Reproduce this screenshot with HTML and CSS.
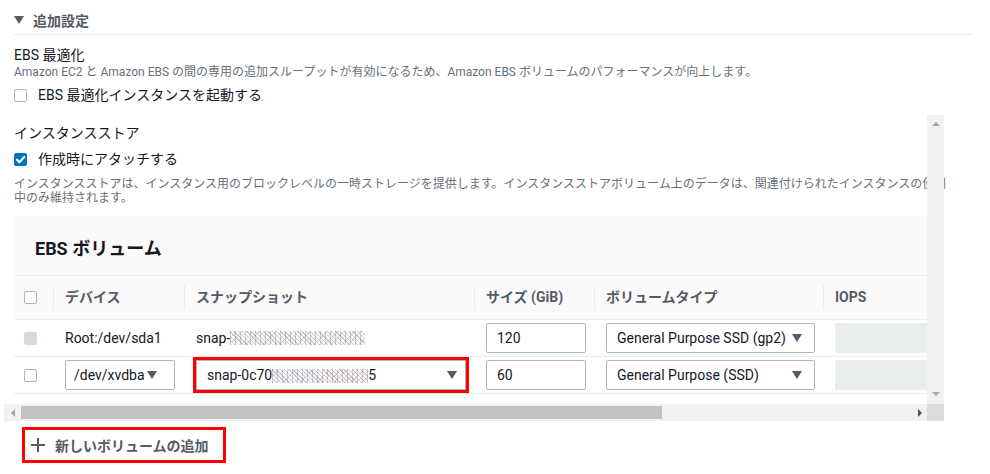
FILE: index.html
```html
<!DOCTYPE html>
<html lang=ja><head>
<meta charset=UTF-8>
<meta name=viewport content="width=device-width,initial-scale=1">
<title>追加設定</title><link rel="stylesheet" href="styles.css"></head><body>
<div class=wrap>
<div class=section-head><span class=caret></span>追加設定</div>
<div class=opt>
<div class=opt-title>EBS 最適化</div>
<div class=desc>Amazon EC2 と Amazon EBS の間の専用の追加スループットが有効になるため、Amazon EBS ボリュームのパフォーマンスが向上します。</div>
<label class=check-row><span class=cb></span>EBS 最適化インスタンスを起動する</label>
</div>
<div class=scroller>
<div class=scroll-body>
<div class=opt-title>インスタンスストア</div>
<label class="check-row mt5"><span class="cb on"><svg viewBox="0 0 13 13" width=13 height=13><path d="M3 6.8l2.4 2.4L10.2 4" fill=none stroke="#fff" stroke-width=2.2 stroke-linecap=round stroke-linejoin=round /></svg></span>作成時にアタッチする</label>
<div class="desc nowrap mt8">インスタンスストアは、インスタンス用のブロックレベルの一時ストレージを提供します。インスタンスストアボリューム上のデータは、関連付けられたインスタンスの使用<br>中のみ維持されます。</div>
<div class=panel>
<div class=panel-title>EBS ボリューム</div>
<div class=tbl>
<div class="trow thead">
<div class=cell><span class=cb></span></div>
<div class=cell><div class=th>デバイス</div></div>
<div class=cell><div class=th>スナップショット</div></div>
<div class=cell><div class=th>サイズ (GiB)</div></div>
<div class=cell><div class=th>ボリュームタイプ</div></div>
<div class=cell><div class=th>IOPS</div></div>
</div>
<div class=trow>
<div class=cell><span class="cb off"></span></div>
<div class=cell>Root:/dev/sda1</div>
<div class=cell>snap-<span class="blur w135"></span></div>
<div class=cell><div class="field w100">120</div></div>
<div class=cell><div class="field sel w209"><span class=val>General Purpose SSD (gp2)</span><span class=arrow></span></div></div>
<div class=cell><div class=iops></div></div>
</div>
<div class=trow>
<div class=cell><span class=cb></span></div>
<div class=cell><div class="field sel w110 tight"><span class=val>/dev/xvdba</span><span class="arrow near"></span></div></div>
<div class=cell><div class="field sel w270 mark"><span class=val>snap-0c70<span class="blur w96"></span>5</span><span class=arrow></span></div></div>
<div class=cell><div class="field w100">60</div></div>
<div class=cell><div class="field sel w209"><span class=val>General Purpose (SSD)</span><span class=arrow></span></div></div>
<div class=cell><div class=iops></div></div>
</div>
</div>
</div>
</div>
<div class=vbar><span class="tri up"></span><span class="tri down"></span></div>
<div class=hbar><span class=hbtn><span class="tri left"></span></span><span class=thumb></span><span class=hbtn><span class="tri right"></span></span></div>
<div class=corner></div>
</div>
<button class=add>
<svg viewBox="0 0 14 14" width=14 height=14><path d="M7 0v14M0 7h14" stroke="#545b64" stroke-width=2 /></svg>新しいボリュームの追加</button>
</div>
</body></html>
```
FILE: styles.css
```css
body{margin:0;background:#fff;color:#16191f;font-family:Roboto,"Noto Sans CJK JP",sans-serif;font-size:14px}
.wrap{padding:0 17px 0 14px}
.section-head{height:28px;padding-top:6px;display:flex;align-items:center;border-bottom:1px solid #eaeded;font-weight:700;color:#545b64}
.caret{width:0;height:0;border-left:5px solid transparent;border-right:5px solid transparent;border-top:8px solid #545b64;margin-right:9px}
.opt{margin-top:10px}.opt-title{line-height:20px}
.desc{font-size:12px;line-height:14px;color:#687078}.nowrap{white-space:nowrap}
.mt5{margin-top:5px}.mt8{margin-top:8px}
.check-row{display:flex;align-items:center;gap:11px;line-height:20px;margin-top:6px}
.cb{width:13px;height:13px;box-sizing:border-box;border:1px solid #aab7b8;border-radius:2px;background:#fff;display:inline-block}
.cb svg{display:block}.cb.on{background:#0073bb;border-color:#0073bb}.cb.on svg{margin:-1px}
.cb.off{background:#d5dbdb;border-color:#d5dbdb}
.scroller{display:grid;grid-template-columns:923px 17px;grid-template-rows:auto 17px;width:940px;margin:10px 0 0 -10px}
.scroll-body{padding:8px 0 10px 10px}
.panel{margin-top:11px;width:913px;overflow:hidden;background:#fafafa}
.panel-title{font-size:18px;font-weight:700;line-height:24px;padding:21px 0 14px 21px}
.tbl{width:1000px;border-top:1px solid #eaeded;border-bottom:1px solid #eaeded}
.trow{display:grid;grid-template-columns:39px 131px 290px 120px 229px 191px;height:36px;align-items:center;background:#fff;border-top:1px solid #eaeded}
.trow.thead{height:43px;border-top:none;background:#fafafa}
.cell{padding-left:12px;white-space:nowrap;display:flex;align-items:center}
.cell:first-child{padding-left:10px}
.thead .cell{padding-left:0}.thead .cell:first-child{padding-left:10px}
.th{border-left:1px solid #eaeded;line-height:25px;padding-left:11px;font-weight:700;color:#545b64;width:100%}
.field{height:30px;box-sizing:border-box;border:1px solid #aab7b8;border-radius:2px;background:#fff;padding:0 10px;display:flex;align-items:center;white-space:nowrap}
.sel .val{overflow:hidden}.sel .arrow{margin-left:auto;flex:none}
.tight{padding:0 11px 0 8px}.arrow.near{margin-left:2px}
.arrow{width:0;height:0;border-left:5.5px solid transparent;border-right:5.5px solid transparent;border-top:8px solid #545b64}
.w100{width:100px}.w110{width:110px}.w209{width:209px;padding-right:12px}.w270{width:270px;padding-right:8px}
.iops{width:160px;height:30px;background:#eaeded;border-radius:2px}
.blur{display:inline-block;height:14px;vertical-align:middle;background:repeating-linear-gradient(45deg,rgba(90,110,190,.35) 0 1px,transparent 1px 3px),repeating-linear-gradient(-45deg,rgba(230,150,70,.35) 0 1px,transparent 1px 4px),repeating-linear-gradient(90deg,rgba(60,60,100,.25) 0 1px,transparent 1px 5px)}
.w135{width:135px}.w96{width:96px}
.mark{outline:3px solid #f00;border-radius:0}
.vbar{grid-column:2;grid-row:1;background:#f1f1f1;display:flex;flex-direction:column;justify-content:space-between;align-items:center;padding:7px 0 8px}
.hbar{grid-column:1;grid-row:2;background:#f1f1f1;display:flex;align-items:center}
.hbtn{width:17px;height:17px;display:flex;align-items:center;justify-content:center;flex:none}
.hbtn:last-child{margin-left:auto}
.thumb{width:641px;height:13px;background:#c1c1c1}
.corner{grid-column:2;grid-row:2;background:#dcdcdc}
.tri{width:0;height:0}
.tri.up{border-left:4px solid transparent;border-right:4px solid transparent;border-bottom:4px solid #a3a3a3}
.tri.down{border-left:4px solid transparent;border-right:4px solid transparent;border-top:4px solid #a3a3a3}
.tri.left{border-top:4px solid transparent;border-bottom:4px solid transparent;border-right:4px solid #a3a3a3}
.tri.right{border-top:4px solid transparent;border-bottom:4px solid transparent;border-left:4px solid #505050;margin-left:2px}
.add{margin:6px 0 0 8px;height:36px;box-sizing:border-box;padding:0 14px 0 6px;border:3px solid #f00;background:#fff;display:flex;align-items:center;gap:10px;font:700 14px Roboto,"Noto Sans CJK JP",sans-serif;color:#545b64;cursor:pointer}
```
